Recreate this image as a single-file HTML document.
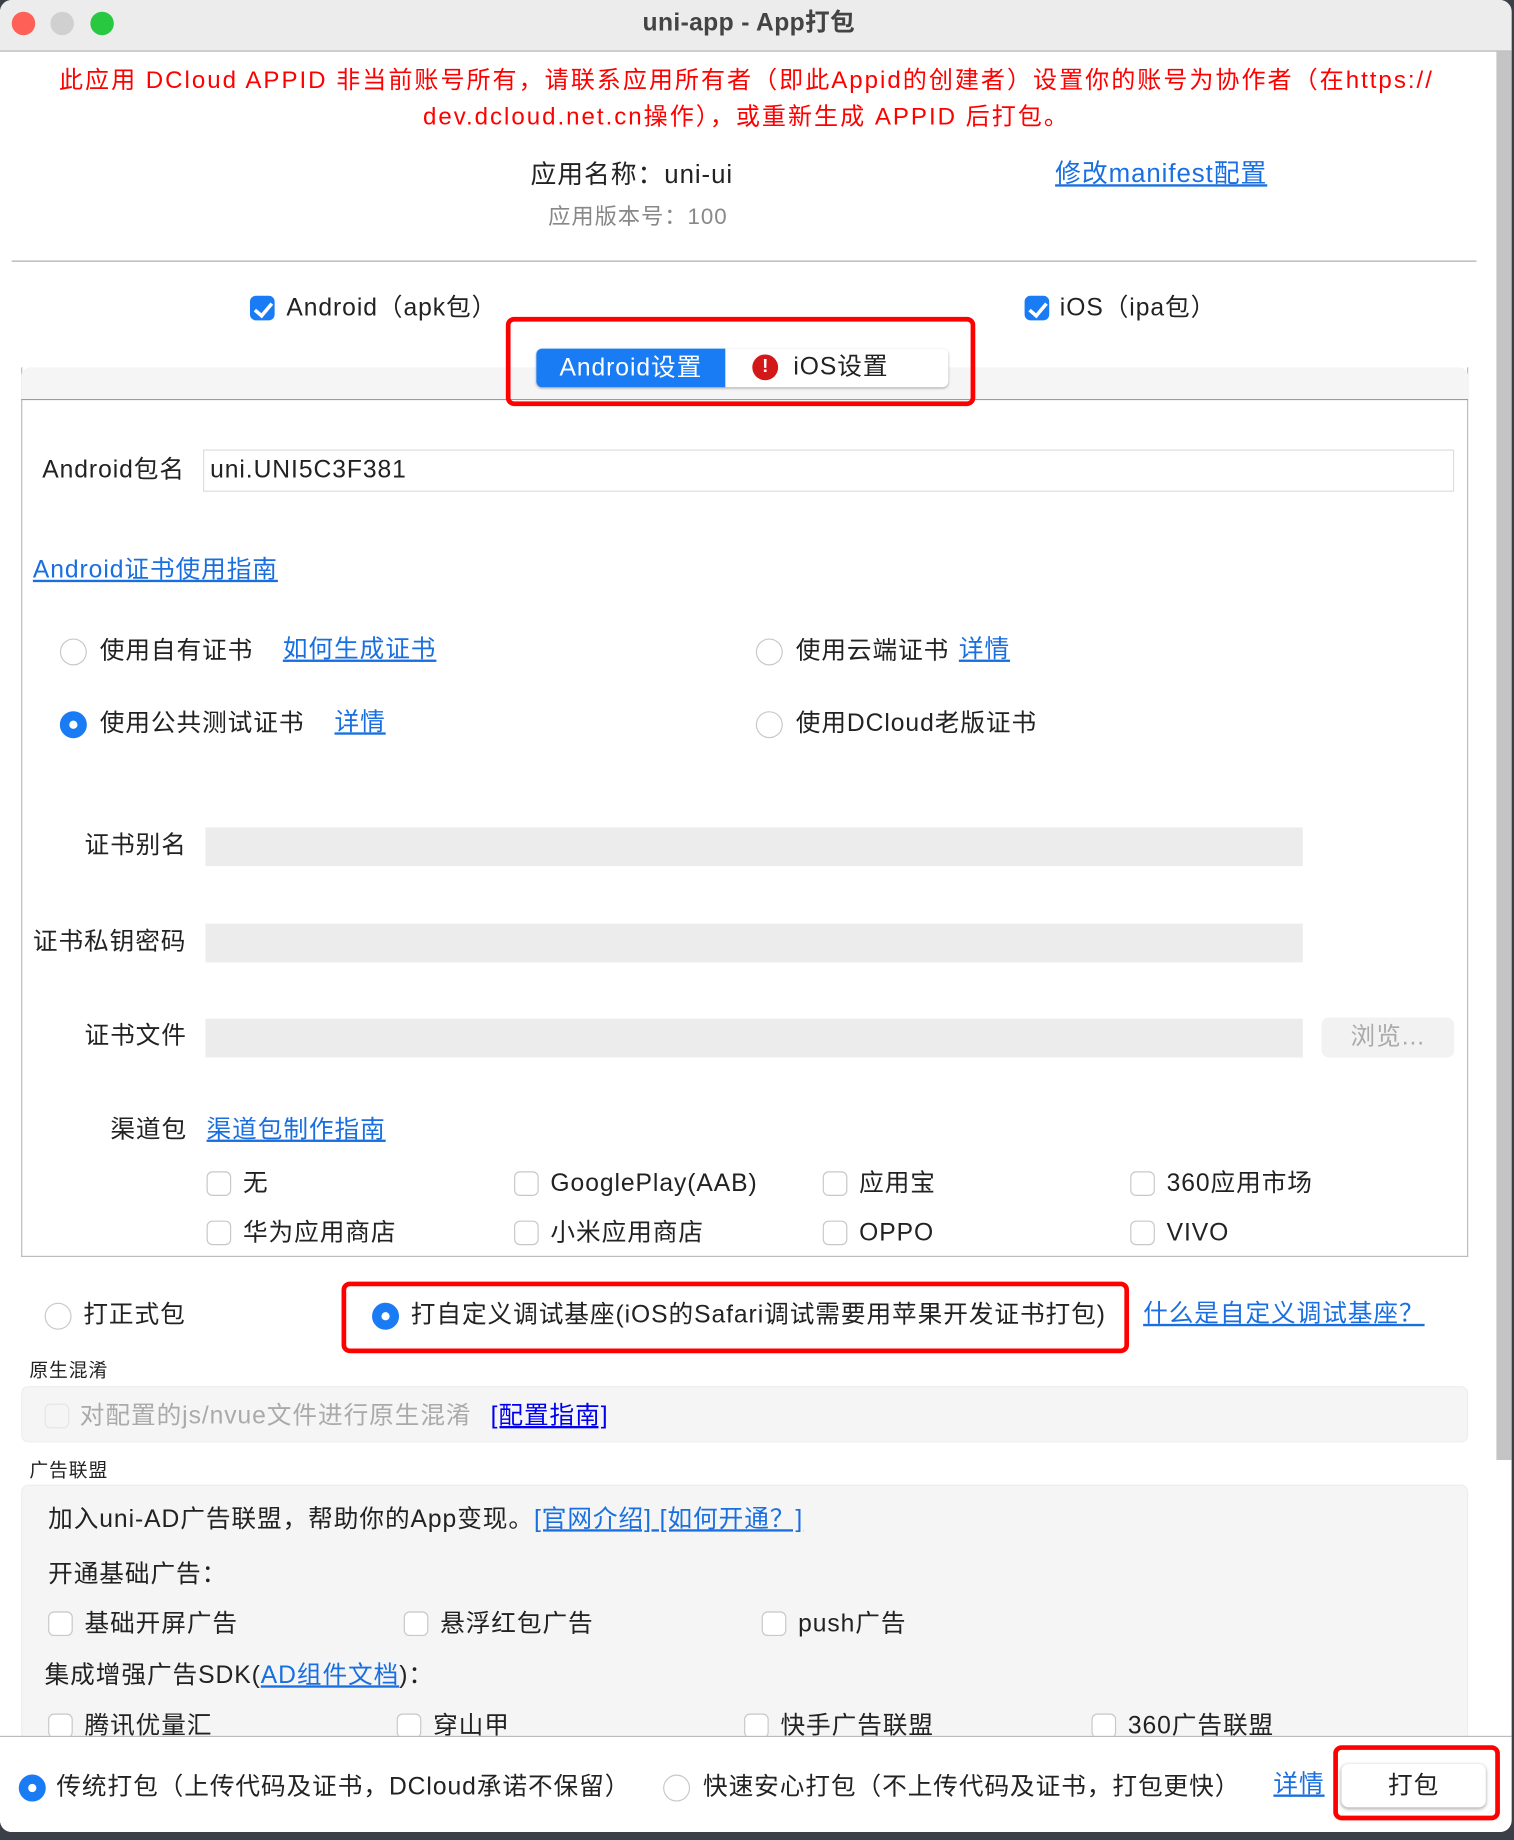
<!DOCTYPE html>
<html><head><meta charset="utf-8"><style>
*{margin:0;padding:0;box-sizing:border-box}
html,body{width:1514px;height:1840px;overflow:hidden;background:#3a3f48}
#w{position:absolute;left:0;top:0;width:1290px;height:1568px;transform:scale(1.17364);transform-origin:0 0;font-family:"Liberation Sans","Noto Sans CJK SC",sans-serif;color:#222;font-size:21px;letter-spacing:0.8px}
.a{position:absolute;white-space:nowrap;line-height:26px}
.win{position:absolute;left:0;top:0;width:1288px;height:1561px;background:#fff;border-radius:10px;overflow:hidden}
.lk{color:#1a6fe0;text-decoration:underline}
.cb{position:absolute;width:21px;height:21px;border:1px solid #c8c8c8;border-radius:5px;background:#fff}
.cbon{background:#1a7cf5;border-color:#1a7cf5}
.cbon:after{content:"";position:absolute;left:6px;top:2px;width:6px;height:12px;border:solid #fff;border-width:0 3px 3px 0;transform:rotate(40deg)}
.rd{position:absolute;width:23px;height:23px;border:1px solid #c8c8c8;border-radius:50%;background:#fff}
.rdon{background:#1a7cf5;border-color:#1a7cf5}
.rdon:after{content:"";position:absolute;left:7px;top:7px;width:7px;height:7px;border-radius:50%;background:#fff}
.in{position:absolute;background:#ececec;height:33px}
.red{position:absolute;border:4px solid #f00;border-radius:7px}
</style></head><body><div id="w">
<div class="win">
<div class="a" style="left:0;top:0;width:1288px;height:44px;background:#ececec;border-bottom:1px solid #b5b5b5"></div>
<div class="a" style="left:10px;top:10px;width:20px;height:20px;border-radius:50%;background:#fe5f57"></div>
<div class="a" style="left:43px;top:10px;width:20px;height:20px;border-radius:50%;background:#d0d0d0"></div>
<div class="a" style="left:77px;top:10px;width:20px;height:20px;border-radius:50%;background:#28c840"></div>
<div class="a" style="left:0;width:1276px;top:7px;text-align:center;font-weight:bold;font-size:21px;color:#444;letter-spacing:0.3px">uni-app - App打包</div>
<div class="a" style="left:1275px;top:44px;width:13px;height:1200px;background:#c4c4c4"></div>
<div class="a" style="left:0;width:1272px;top:53px;text-align:center;color:#f00;font-size:20.5px;line-height:31px;letter-spacing:1.7px">此应用 DCloud APPID 非当前账号所有，请联系应用所有者（即此Appid的创建者）设置你的账号为协作者（在https://<br>dev.dcloud.net.cn操作），或重新生成 APPID 后打包。</div>
<div class="a" style="left:452px;top:136px;font-size:22px">应用名称：uni-ui</div>
<div class="a lk" style="left:899px;top:135px;font-size:22px">修改manifest配置</div>
<div class="a" style="left:467px;top:173px;font-size:19px;color:#888">应用版本号：100</div>
<div class="a" style="left:10px;top:222px;width:1248px;height:1px;background:#aaa"></div>
<div class="cb cbon" style="left:213px;top:252px"></div><div class="a" style="left:244px;top:250px">Android（apk包）</div>
<div class="cb cbon" style="left:873px;top:252px"></div><div class="a" style="left:903px;top:250px">iOS（ipa包）</div>
<div class="a" style="left:18px;top:313px;width:1233px;height:758px;border:1px solid #bbb;border-top:none;background:#fff"></div>
<div class="a" style="left:18px;top:313px;width:1233px;height:28px;background:#f5f5f5;border-bottom:1px solid #999;border-radius:8px 8px 0 0"></div>
<div class="a" style="left:457px;top:297px;width:351px;height:33px;border-radius:5px;background:#fff;box-shadow:0 1px 2px rgba(0,0,0,.3)"></div>
<div class="a" style="left:457px;top:297px;width:161px;height:33px;border-radius:5px 0 0 5px;background:#1a7cf5;color:#fff;text-align:center;line-height:33px">Android设置</div>
<div class="a" style="left:641px;top:302px;width:22px;height:22px;border-radius:50%;background:#d21818;color:#fff;font-weight:bold;font-size:16px;text-align:center;line-height:22px;letter-spacing:0">!</div>
<div class="a" style="left:676px;top:300px">iOS设置</div>
<div class="red" style="left:431px;top:270px;width:400px;height:76px"></div>
<div class="a" style="left:36px;top:388px">Android包名</div>
<div class="a" style="left:173px;top:383px;width:1066px;height:36px;border:1px solid #ddd;background:#fff;padding-left:5px;line-height:33px">uni.UNI5C3F381</div>
<div class="a lk" style="left:28px;top:473px">Android证书使用指南</div>
<div class="rd" style="left:51px;top:544px"></div><div class="a" style="left:85px;top:542px">使用自有证书</div><div class="a lk" style="left:241px;top:541px">如何生成证书</div>
<div class="rd" style="left:644px;top:544px"></div><div class="a" style="left:678px;top:542px">使用云端证书</div><div class="a lk" style="left:817px;top:541px">详情</div>
<div class="rd rdon" style="left:51px;top:606px"></div><div class="a" style="left:85px;top:604px">使用公共测试证书</div><div class="a lk" style="left:285px;top:603px">详情</div>
<div class="rd" style="left:644px;top:606px"></div><div class="a" style="left:678px;top:604px">使用DCloud老版证书</div>
<div class="a" style="left:72px;top:708px">证书别名</div><div class="in" style="left:175px;top:705px;width:935px"></div>
<div class="a" style="left:28px;top:790px">证书私钥密码</div><div class="in" style="left:175px;top:787px;width:935px"></div>
<div class="a" style="left:72px;top:870px">证书文件</div><div class="in" style="left:175px;top:868px;width:935px"></div>
<div class="a" style="left:1126px;top:867px;width:113px;height:34px;background:#f2f2f2;border-radius:6px;color:#aaa;text-align:center;line-height:34px">浏览...</div>
<div class="a" style="left:94px;top:950px">渠道包</div><div class="a lk" style="left:176px;top:950px">渠道包制作指南</div>
<div class="cb" style="left:176px;top:998px"></div><div class="a" style="left:207px;top:996px">无</div>
<div class="cb" style="left:438px;top:998px"></div><div class="a" style="left:469px;top:996px">GooglePlay(AAB)</div>
<div class="cb" style="left:701px;top:998px"></div><div class="a" style="left:732px;top:996px">应用宝</div>
<div class="cb" style="left:963px;top:998px"></div><div class="a" style="left:994px;top:996px">360应用市场</div>
<div class="cb" style="left:176px;top:1040px"></div><div class="a" style="left:207px;top:1038px">华为应用商店</div>
<div class="cb" style="left:438px;top:1040px"></div><div class="a" style="left:469px;top:1038px">小米应用商店</div>
<div class="cb" style="left:701px;top:1040px"></div><div class="a" style="left:732px;top:1038px">OPPO</div>
<div class="cb" style="left:963px;top:1040px"></div><div class="a" style="left:994px;top:1038px">VIVO</div>
<div class="rd" style="left:38px;top:1110px"></div><div class="a" style="left:71px;top:1108px">打正式包</div>
<div class="rd rdon" style="left:317px;top:1110px"></div><div class="a" style="left:350px;top:1108px">打自定义调试基座(iOS的Safari调试需要用苹果开发证书打包)</div>
<div class="red" style="left:291px;top:1092px;width:671px;height:61px"></div>
<div class="a lk" style="left:974px;top:1107px">什么是自定义调试基座？</div>
<div class="a" style="left:25px;top:1156px;font-size:16px">原生混淆</div>
<div class="a" style="left:18px;top:1181px;width:1233px;height:48px;background:#f5f5f5;border:1px solid #eee;border-radius:6px"></div>
<div class="cb" style="left:38px;top:1196px;border-color:#e6e6e6;background:#f5f5f5"></div><div class="a" style="left:68px;top:1194px;color:#aaa">对配置的js/nvue文件进行原生混淆</div><div class="a" style="left:418px;top:1194px;color:#00e;text-decoration:underline">[配置指南]</div>
<div class="a" style="left:25px;top:1241px;font-size:16px">广告联盟</div>
<div class="a" style="left:18px;top:1265px;width:1233px;height:260px;background:#f5f5f5;border:1px solid #eee;border-radius:6px"></div>
<div class="a" style="left:41px;top:1282px">加入uni-AD广告联盟，帮助你的App变现。<span class="lk">[官网介绍] [如何开通？]</span></div>
<div class="a" style="left:41px;top:1329px">开通基础广告：</div>
<div class="cb" style="left:41px;top:1373px"></div><div class="a" style="left:72px;top:1371px">基础开屏广告</div>
<div class="cb" style="left:344px;top:1373px"></div><div class="a" style="left:375px;top:1371px">悬浮红包广告</div>
<div class="cb" style="left:649px;top:1373px"></div><div class="a" style="left:680px;top:1371px">push广告</div>
<div class="a" style="left:38px;top:1415px">集成增强广告SDK(<span class="lk">AD组件文档</span>)：</div>
<div class="cb" style="left:41px;top:1460px"></div><div class="a" style="left:72px;top:1458px">腾讯优量汇</div>
<div class="cb" style="left:338px;top:1460px"></div><div class="a" style="left:369px;top:1458px">穿山甲</div>
<div class="cb" style="left:634px;top:1460px"></div><div class="a" style="left:665px;top:1458px">快手广告联盟</div>
<div class="cb" style="left:930px;top:1460px"></div><div class="a" style="left:961px;top:1458px">360广告联盟</div>
<div class="a" style="left:0;top:1479px;width:1288px;height:82px;background:#fff;border-top:1px solid #bbb"></div>
<div class="rd rdon" style="left:16px;top:1512px"></div><div class="a" style="left:48px;top:1510px">传统打包（上传代码及证书，DCloud承诺不保留）</div>
<div class="rd" style="left:565px;top:1512px"></div><div class="a" style="left:599px;top:1510px">快速安心打包（不上传代码及证书，打包更快）</div>
<div class="a lk" style="left:1085px;top:1508px">详情</div>
<div class="a" style="left:1143px;top:1503px;width:123px;height:37px;background:#fff;border-radius:6px;box-shadow:0 1px 3px rgba(0,0,0,.35);text-align:center;line-height:37px">打包</div>
<div class="red" style="left:1136px;top:1487px;width:142px;height:64px"></div>
</div>
</div></body></html>
